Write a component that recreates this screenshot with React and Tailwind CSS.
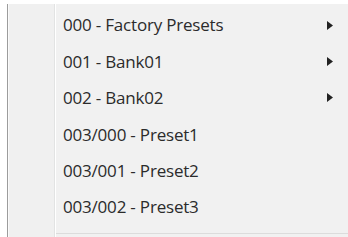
const items = [
  { label: '000 - Factory Presets', sub: true },
  { label: '001 - Bank01', sub: true },
  { label: '002 - Bank02', sub: true },
  { label: '003/000 - Preset1' },
  { label: '003/001 - Preset2' },
  { label: '003/002 - Preset3' },
];

function Arrow() {
  return (
    <svg width="6" height="9" viewBox="0 0 6 9" className="shrink-0">
      <path d="M0 0 L6 4.5 L0 9 Z" fill="#222" />
    </svg>
  );
}

export default function App() {
  return (
    <div className="w-[348px] h-[237px] bg-white pt-[4px] pl-[7px] overflow-hidden">
      <div className="flex h-[240px] border-l border-[#9c9c9c] bg-[#f1f1f1]">
        {/* icon gutter */}
        <div className="w-px bg-[#fbfbfb]" />
        <div className="w-[45px] shrink-0 bg-[#f0f0f0]" />
        <div className="w-px bg-[#e2e3e3]" />
        <div className="w-px bg-white" />
        <div className="flex-1 flex flex-col">
          <div className="pt-[3px] flex flex-col">
            {items.map((it) => (
              <div
                key={it.label}
                className="h-[36.4px] flex items-center pl-[7px] pr-[15px] text-[17px] text-[#2b2b2b] font-['Open_Sans',sans-serif] tracking-[-0.2px]"
              >
                <span className="flex-1">{it.label}</span>
                {it.sub && <Arrow />}
              </div>
            ))}
          </div>
          <div className="h-px bg-[#dcdcdc] mt-[8px]" />
        </div>
      </div>
    </div>
  );
}
